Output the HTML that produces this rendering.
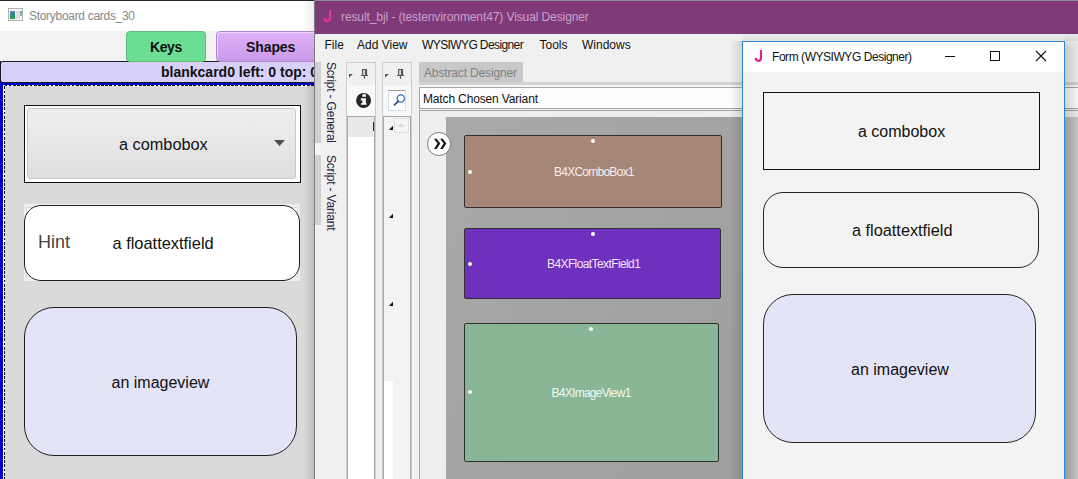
<!DOCTYPE html>
<html><head><meta charset="utf-8">
<style>
*{box-sizing:border-box;margin:0;padding:0}
html,body{width:1078px;height:479px;overflow:hidden;background:#f0f0f0;font-family:"Liberation Sans",sans-serif;position:relative}
.a{position:absolute}
.t{white-space:nowrap;line-height:1}
</style></head><body>
<!-- top dark line -->
<div class="a" style="left:0;top:0;width:314px;height:1px;background:#262626"></div>
<div class="a" style="left:314px;top:0;width:764px;height:1px;background:#8a8a8a"></div>

<!-- ============ LEFT WINDOW ============ -->
<div class="a" style="left:0;top:1px;width:314px;height:30px;background:#fff"></div>
<div class="a" style="left:8px;top:8px;width:15px;height:13px;border:1px solid #b0b0b0;background:#f4f4f4">
  <div class="a" style="left:1px;top:2px;width:5px;height:8px;background:linear-gradient(165deg,#5a88c8,#2e8a7a 50%,#3aa050)"></div>
  <div class="a" style="left:7.4px;top:2px;width:3.2px;height:8px;background:#dedede"></div>
  <div class="a" style="left:10.8px;top:2px;width:2.1px;height:4.6px;background:linear-gradient(#6a9ad8,#8ac878)"></div>
</div>
<div class="a t" style="left:29px;top:10px;font-size:12px;letter-spacing:-0.3px;color:#878787">Storyboard cards_30</div>
<div class="a" style="left:0;top:31px;width:314px;height:31px;background:#f2f2f2"></div>
<div class="a" style="left:302px;top:1px;width:12px;height:61px;background:linear-gradient(90deg,rgba(0,0,0,0),rgba(0,0,0,0.07))"></div>
<!-- status bar -->
<div class="a" style="left:0;top:61px;width:320px;height:22px;background:#d8d0fb;border:1px solid #1a1a1a;border-radius:3px 0 0 3px"></div>
<div class="a t" style="left:161px;top:65px;font-size:14px;font-weight:bold;color:#111">blankcard0 left: 0 top: 0</div>
<!-- Keys tab -->
<div class="a" style="left:126px;top:31px;width:80px;height:31px;background:#6cde94;border:1px solid #5cbd7e;border-radius:4px"></div>
<div class="a t" style="left:150px;top:40px;font-size:14px;font-weight:bold;letter-spacing:-0.4px;color:#111">Keys</div>
<!-- Shapes tab -->
<div class="a" style="left:216px;top:31px;width:110px;height:31px;background:linear-gradient(#dfb2fa,#c99ae8);border:1px solid #b088d0;border-radius:4px;box-shadow:inset 1px 1px 0 rgba(255,255,255,0.5)"></div>
<div class="a t" style="left:246px;top:40px;font-size:14px;font-weight:bold;letter-spacing:-0.1px;color:#111">Shapes</div>
<!-- blue frame -->
<div class="a" style="left:0;top:83px;width:314px;height:2px;background:#0000c8"></div>
<div class="a" style="left:0;top:82px;width:3px;height:397px;background:#0000c8"></div>
<div class="a" style="left:0;top:61px;width:1px;height:21px;background:#1a1a1a"></div>
<!-- card bg -->
<div class="a" style="left:3px;top:85px;width:311px;height:394px;background:#dadada"></div>
<div class="a" style="left:3px;top:85px;width:311px;height:1px;background:repeating-linear-gradient(90deg,#fff 0 1.5px,#111 1.5px 4.2px)"></div>
<div class="a" style="left:3px;top:85px;width:1px;height:394px;background:#ffffe8"></div>
<div class="a" style="left:4px;top:85px;width:1px;height:394px;background:repeating-linear-gradient(180deg,#fff 0 1.5px,#111 1.5px 4.2px)"></div>
<!-- shadow at right -->
<div class="a" style="left:304px;top:86px;width:10px;height:393px;background:linear-gradient(90deg,rgba(0,0,0,0),rgba(0,0,0,0.13))"></div>

<!-- combobox -->
<div class="a" style="left:24px;top:105px;width:277px;height:78px;background:#fff;border:1.5px solid #111"></div>
<div class="a" style="left:27px;top:108px;width:269px;height:71px;background:linear-gradient(#efefef,#dedede);border:1px solid #c8c8c8;border-radius:3px"></div>
<div class="a t" style="left:119px;top:135.7px;font-size:16.3px;color:#111">a combobox</div>
<svg class="a" style="left:274px;top:140px" width="11" height="7"><path d="M0 0H11L5.5 6Z" fill="#505050"/></svg>

<!-- floattextfield -->
<div class="a" style="left:24px;top:204px;width:276px;height:77px;background:#efefef"></div>
<div class="a" style="left:26px;top:207px;width:272px;height:70px;background:#fff;border:1px solid #d8d8d8"></div>
<div class="a" style="left:24px;top:205px;width:276px;height:76px;background:#fff;border:1.5px solid #1f1f1f;border-radius:17px"></div>
<div class="a t" style="left:38px;top:232.7px;font-size:18px;color:#444">Hint</div>
<div class="a t" style="left:112.5px;top:235px;font-size:16.4px;color:#111">a floattextfield</div>

<!-- imageview -->
<div class="a" style="left:24px;top:307px;width:273px;height:149px;background:#e4e4f8;border:1.5px solid #1f1f1f;border-radius:30px"></div>
<div class="a t" style="left:111.5px;top:374.5px;font-size:16px;color:#111">an imageview</div>

<!-- ============ DESIGNER WINDOW ============ -->
<div class="a" style="left:314px;top:1px;width:764px;height:478px;background:#f0f0f0;border-left:1px solid #7c7c7c"></div>
<div class="a" style="left:315px;top:1px;width:763px;height:33px;background:#803a7a"></div>
<svg class="a" style="left:318px;top:6px" width="20" height="20"><path d="M12.15 4V12.3Q12.15 15.05 9.3 15.05Q6.45 15.05 6.45 11.9" fill="none" stroke="#e535a5" stroke-width="2.1"/></svg>
<div class="a t" style="left:341px;top:10.8px;font-size:12px;letter-spacing:-0.1px;color:#c9a2c9">result_bjl - (testenvironment47) Visual Designer</div>
<!-- menu -->
<div class="a t" style="left:324.5px;top:38.6px;font-size:12px;color:#111">File</div>
<div class="a t" style="left:357px;top:38.6px;font-size:12px;color:#111">Add View</div>
<div class="a t" style="left:422px;top:38.6px;font-size:12px;letter-spacing:-0.6px;color:#111">WYSIWYG Designer</div>
<div class="a t" style="left:539.5px;top:38.6px;font-size:12px;color:#111">Tools</div>
<div class="a t" style="left:582px;top:38.6px;font-size:12px;color:#111">Windows</div>

<!-- vertical tabs -->
<div class="a" style="left:315px;top:62px;width:6px;height:81px;background:#d0d0d0"></div>
<div class="a" style="left:315px;top:143px;width:6px;height:12px;background:#f4f4f4"></div>
<div class="a" style="left:315px;top:155px;width:6px;height:70px;background:#d0d0d0"></div>
<div class="a t" style="left:336.5px;top:61.5px;font-size:12px;letter-spacing:-0.2px;color:#2a2040;transform-origin:0 0;transform:rotate(90deg)">Script - General</div>
<div class="a t" style="left:336.5px;top:155.3px;font-size:12px;letter-spacing:-0.2px;color:#2a2040;transform-origin:0 0;transform:rotate(90deg)">Script - Variant</div>

<!-- panel 1 -->
<div class="a" style="left:346px;top:62px;width:30px;height:417px;background:#f0f0f0;border:1px solid #cdcdcd"></div>
<div class="a" style="left:347px;top:85px;width:28px;height:31px;background:#f8f8f8"></div>
<div class="a" style="left:347px;top:116px;width:28px;height:363px;background:#fff;border-left:1px solid #a8a8a8;border-right:1px solid #a8a8a8;border-top:1px solid #a8a8a8"></div>
<div class="a" style="left:348px;top:117px;width:26px;height:20px;background:#e9e9e9"></div>
<div class="a" style="left:373px;top:122px;width:1.2px;height:9px;background:#5a0a30"></div>
<svg class="a" style="left:348px;top:73px" width="6" height="6"><path d="M1 1H4.8L1 4.8Z" fill="#555"/></svg>
<svg class="a" style="left:356px;top:64px" width="16" height="18"><path d="M7.3 6H8.8V10.9H7.3Z" fill="#fff"/><path fill-rule="evenodd" d="M6 4.9H11.1V10.9H12V12H9V14.7H7.9V12H5V10.9H6ZM7.3 6V10.9H8.8V6Z" fill="#555"/></svg>
<svg class="a" style="left:355px;top:92px" width="18" height="18"><circle cx="8.6" cy="8.4" r="7.5" fill="#262626"/><path d="M7.4 2.3H10.9V4.8H7.4ZM5.9 6.3H10.9V11.3H11.6V12.8H5.9V11.3H7.4V8.5H5.9Z" fill="#fff"/></svg>
<!-- panel 2 -->
<div class="a" style="left:382px;top:62px;width:30px;height:417px;background:#f0f0f0;border:1px solid #cdcdcd"></div>
<div class="a" style="left:383px;top:85px;width:28px;height:31px;background:#f8f8f8"></div>
<div class="a" style="left:388px;top:90px;width:18px;height:20.5px;background:#fff;border:1px solid #d6dde8;border-top:1px solid #9a9a9a"></div>
<svg class="a" style="left:386px;top:88px" width="22" height="24"><circle cx="14.8" cy="10.5" r="3.6" fill="none" stroke="#2a6cc4" stroke-width="1.3"/><path d="M12.4 13.2L8.4 16.9" stroke="#1c4a90" stroke-width="1.6" stroke-linecap="round"/></svg>
<div class="a" style="left:383px;top:116px;width:28px;height:363px;background:#f3f3f3;border-left:1px solid #a8a8a8;border-right:1px solid #a8a8a8;border-top:1px solid #a8a8a8"></div>
<div class="a" style="left:394px;top:117.5px;width:14.5px;height:15px;background:#f6f6f6;border:1px solid #dedede"></div>
<svg class="a" style="left:396px;top:122px" width="10" height="6"><path d="M1.8 4.8H8.6L5.2 1.2Z" fill="#d8d8d8"/></svg>
<div class="a" style="left:384px;top:381px;width:9px;height:98px;background:#fff"></div>
<svg class="a" style="left:388px;top:125px" width="6" height="6"><path d="M5 0.8V5H0.8Z" fill="#111"/></svg>
<svg class="a" style="left:388px;top:213px" width="6" height="6"><path d="M5 0.8V5H0.8Z" fill="#111"/></svg>
<svg class="a" style="left:388px;top:301px" width="6" height="6"><path d="M5 0.8V5H0.8Z" fill="#111"/></svg>
<svg class="a" style="left:384px;top:73px" width="6" height="6"><path d="M1 1H4.8L1 4.8Z" fill="#555"/></svg>
<svg class="a" style="left:392px;top:64px" width="16" height="18"><path d="M7.3 6H8.8V10.9H7.3Z" fill="#fff"/><path fill-rule="evenodd" d="M6 4.9H11.1V10.9H12V12H9V14.7H7.9V12H5V10.9H6ZM7.3 6V10.9H8.8V6Z" fill="#555"/></svg>

<!-- Abstract designer -->
<div class="a" style="left:419px;top:62px;width:104px;height:20px;background:#c9c9c9"></div>
<div class="a t" style="left:424px;top:67.2px;font-size:12px;letter-spacing:-0.15px;color:#7f7f7f">Abstract Designer</div>
<div class="a" style="left:419px;top:82px;width:700px;height:3px;background:#d3d3d3"></div>
<div class="a" style="left:419px;top:85px;width:700px;height:2px;background:#f7f7f7"></div>
<div class="a" style="left:419px;top:87px;width:700px;height:22px;background:#fdfdfd;border:1px solid #a6a6a6"></div>
<div class="a t" style="left:423px;top:93px;font-size:12px;letter-spacing:-0.15px;color:#111">Match Chosen Variant</div>
<div class="a" style="left:419px;top:110px;width:700px;height:400px;background:#efefef;border:1px solid #a6a6a6"></div>
<div class="a" style="left:446px;top:117px;width:700px;height:400px;background:linear-gradient(120deg,#a9a9a9,#9f9f9f 50%)"></div>
<!-- >> button -->
<div class="a" style="left:427px;top:132.3px;width:23.5px;height:23.5px;border-radius:50%;background:#fff;border:1px solid #7a7a7a"></div>
<svg class="a" style="left:424px;top:129px" width="30" height="30"><path d="M10 9.7H12.6L16.3 14.6L12.6 19.9H10L13.6 14.6ZM16.1 9.7H18.7L22.4 14.6L18.7 19.9H16.1L19.7 14.6Z" fill="#111"/></svg>

<!-- boxes -->
<div class="a" style="left:464px;top:135px;width:258px;height:73px;background:#a68676;border:1px solid #2e2e2e;border-radius:2px"></div>
<div class="a t" style="left:554px;top:165.6px;font-size:12px;letter-spacing:-0.75px;color:#f6eef0">B4XComboBox1</div>
<div class="a" style="left:591px;top:138.5px;width:4px;height:4px;border-radius:50%;background:#fff"></div>
<div class="a" style="left:468px;top:169.5px;width:4px;height:4px;border-radius:50%;background:#fff"></div>

<div class="a" style="left:464px;top:228px;width:257px;height:71px;background:#7030be;border:1px solid #2e2e2e;border-radius:2px"></div>
<div class="a t" style="left:547px;top:257.5px;font-size:12px;letter-spacing:-0.6px;color:#f2e6fa">B4XFloatTextField1</div>
<div class="a" style="left:591px;top:232px;width:4px;height:4px;border-radius:50%;background:#fff"></div>
<div class="a" style="left:468px;top:262px;width:4px;height:4px;border-radius:50%;background:#fff"></div>

<div class="a" style="left:464px;top:323px;width:255px;height:139px;background:#88b696;border:1px solid #2e2e2e;border-radius:2px"></div>
<div class="a t" style="left:551.5px;top:387.2px;font-size:12px;letter-spacing:-0.72px;color:#f2f8f2">B4XImageView1</div>
<div class="a" style="left:589px;top:326.7px;width:4px;height:4px;border-radius:50%;background:#fff"></div>
<div class="a" style="left:468px;top:390px;width:4px;height:4px;border-radius:50%;background:#fff"></div>

<!-- ============ FORM WINDOW ============ -->
<div class="a" style="left:730px;top:41px;width:12px;height:438px;background:linear-gradient(90deg,rgba(0,0,0,0),rgba(0,0,0,0.12))"></div>
<div class="a" style="left:742px;top:30px;width:336px;height:11px;background:linear-gradient(180deg,rgba(0,0,0,0),rgba(0,0,0,0.06))"></div>
<div class="a" style="left:1065px;top:34px;width:13px;height:83px;background:linear-gradient(90deg,rgba(0,0,0,0.16),rgba(0,0,0,0.03));-webkit-mask-image:linear-gradient(180deg,transparent,#000 14px)"></div>
<div class="a" style="left:1065px;top:117px;width:13px;height:362px;background:linear-gradient(90deg,#9a9a9a,#c3c3c3)"></div>
<div class="a" style="left:742px;top:41px;width:323px;height:438px;background:#f3f3f3;border:1px solid #2b86d6;border-bottom:none"></div>
<div class="a" style="left:743px;top:42px;width:321px;height:30px;background:#fff"></div>
<svg class="a" style="left:748px;top:46px" width="20" height="20"><path d="M12.95 4V12Q12.95 14.85 10.35 14.85Q7.75 14.85 7.75 12.1" fill="none" stroke="#e0208f" stroke-width="2.1"/></svg>
<div class="a t" style="left:772px;top:50.5px;font-size:12px;letter-spacing:-0.45px;color:#111">Form (WYSIWYG Designer)</div>
<div class="a" style="left:945px;top:56px;width:10px;height:1px;background:#111"></div>
<div class="a" style="left:990px;top:51px;width:10px;height:10px;border:1px solid #111"></div>
<svg class="a" style="left:1035px;top:50px" width="12" height="12"><path d="M1 1L11 11M11 1L1 11" stroke="#111" stroke-width="1.1"/></svg>

<div class="a" style="left:763px;top:92px;width:277px;height:78px;border:1.3px solid #111"></div>
<div class="a t" style="left:858px;top:124.3px;font-size:16px;color:#111">a combobox</div>

<div class="a" style="left:763px;top:192px;width:276px;height:76px;border:1.5px solid #262626;border-radius:20px"></div>
<div class="a t" style="left:852px;top:222.2px;font-size:16.3px;color:#111">a floattextfield</div>

<div class="a" style="left:763px;top:294px;width:273px;height:149px;background:#e4e4f8;border:1.5px solid #262626;border-radius:30px"></div>
<div class="a t" style="left:851px;top:362.2px;font-size:16px;color:#111">an imageview</div>

</body></html>
